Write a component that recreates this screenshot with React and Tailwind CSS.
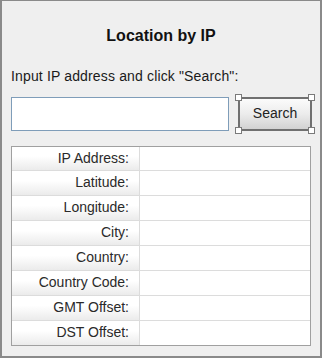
import React from "react";

const FIELDS = [
  "IP Address:",
  "Latitude:",
  "Longitude:",
  "City:",
  "Country:",
  "Country Code:",
  "GMT Offset:",
  "DST Offset:",
];

function Handle({ className }) {
  return <span className={`absolute w-[7px] h-[7px] bg-white border border-[#7a7a7a] ${className}`} />;
}

export default function App() {
  return (
    <div
      className="w-[322px] h-[358px] border-t border-l-2 border-r-2 border-b-2 border-[#8a8a8a] bg-[#efefef] text-[#111] flex flex-col"
      style={{ fontFamily: '"Liberation Sans", Arial, sans-serif' }}
    >
      <h1 className="mt-[25px] text-center text-[16px] leading-[20px] font-bold">Location by IP</h1>

      <p className="mt-[22px] ml-[9px] text-[14px] leading-[16px] tracking-[0.15px] text-[#1a1a1a]">
        Input IP address and click "Search":
      </p>

      <div className="mt-[13px] ml-[9px] flex items-stretch h-[34px]">
        <input className="w-[218px] border border-[#7f9db9] bg-white outline-none" />
        <div className="relative ml-[9px] w-[74px]">
          <button className="w-full h-full pb-[2px] border-2 border-[#707070] bg-gradient-to-b from-[#fbfbfb] via-[#ececec] to-[#d2d2d2] text-[14px] text-[#222]">
            Search
          </button>
          <Handle className="-left-[3px] -top-[3px]" />
          <Handle className="-right-[3px] -top-[3px]" />
          <Handle className="-left-[3px] -bottom-[3px]" />
          <Handle className="-right-[3px] -bottom-[3px]" />
        </div>
      </div>

      <div className="mt-[15px] ml-[9px] w-[300px] border border-[#a0a0a0] bg-white">
        {FIELDS.map((label, i) => (
          <div
            key={label}
            className={`flex box-content ${i > 0 ? "h-[24px] border-t border-[#dcdcdc]" : "h-[23px]"}`}
          >
            <div className="w-[128px] flex items-center justify-end pr-[10px] pb-[1px] text-[14px] text-[#2a2a2a] bg-gradient-to-b from-white from-40% to-[#ebebeb] border-r border-[#dcdcdc]">
              {label}
            </div>
            <div className="flex-1 bg-white" />
          </div>
        ))}
      </div>
    </div>
  );
}
